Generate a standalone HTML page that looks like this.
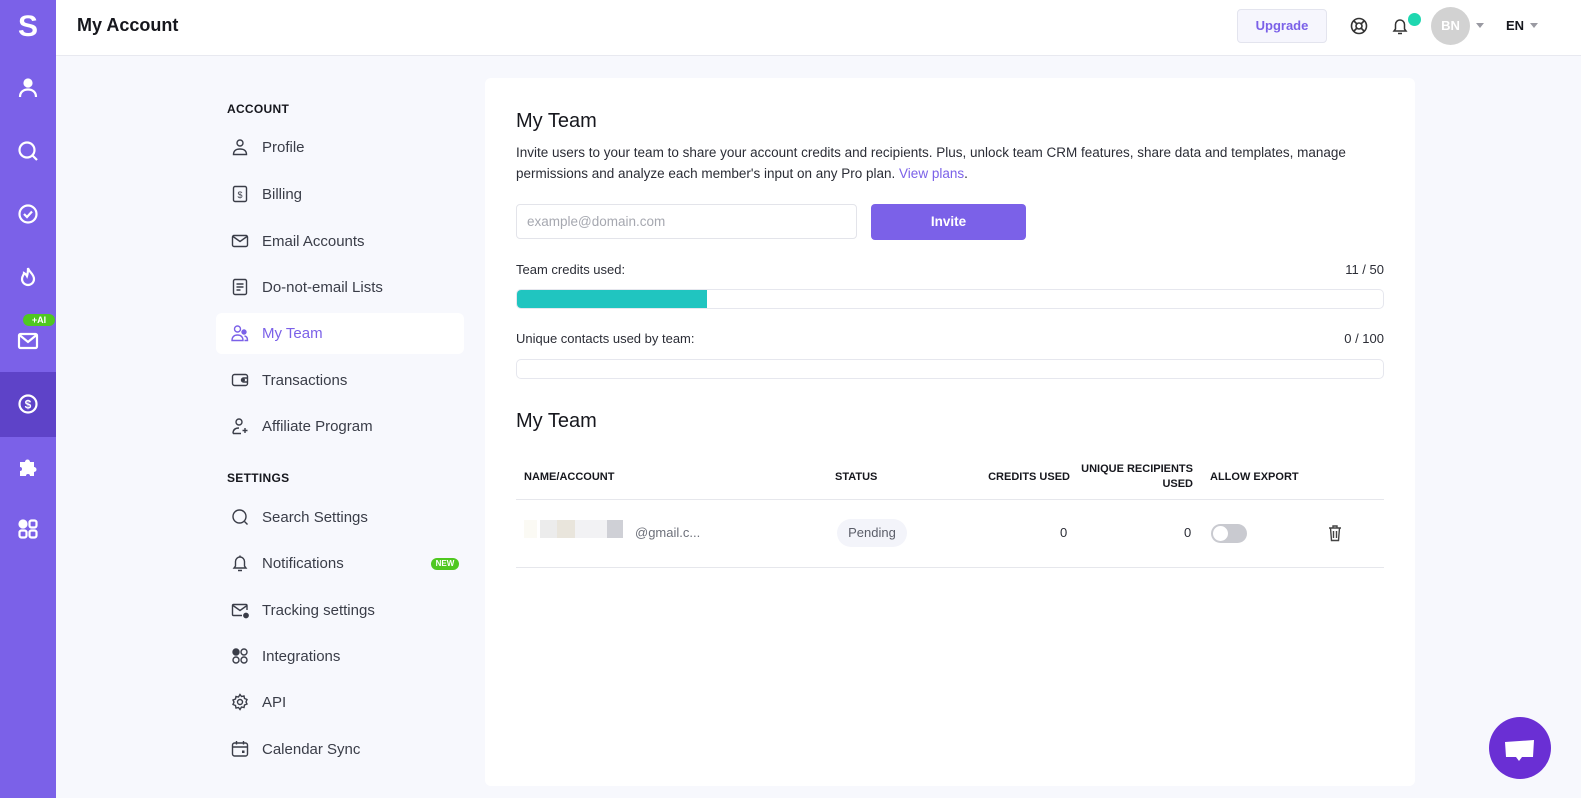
<!DOCTYPE html>
<html><head><meta charset="utf-8">
<style>
*{box-sizing:border-box;margin:0;padding:0}
body{width:1581px;height:798px;overflow:hidden;background:#f7f8fd;font-family:"Liberation Sans",sans-serif;color:#2b2d36;position:relative}
.side{position:absolute;left:0;top:0;width:56px;height:798px;background:#7b61e8}
.side .ic{position:absolute;left:16px;width:24px;height:24px}
.active{position:absolute;left:0;top:372px;width:56px;height:65px;background:#5e43c8}
.hdr{position:absolute;left:56px;top:0;right:0;height:56px;background:#fff;border-bottom:1px solid #e8e9f0}
.hdr h1{position:absolute;left:21px;top:15px;font-size:18px;font-weight:bold;color:#16171d}
.upg{position:absolute;left:1237px;top:9px;width:90px;height:34px;border:1px solid #e3e4ee;background:#f6f6fd;border-radius:4px;color:#7b61e8;font-size:13px;font-weight:bold;text-align:center;line-height:32px}
.av{position:absolute;left:1431px;top:7px;width:39px;height:38px;border-radius:50%;background:#d2d2d2;color:#fff;font-size:13px;font-weight:bold;text-align:center;line-height:38px}
.menu .sec{position:absolute;left:227px;font-size:12px;font-weight:bold;letter-spacing:.3px;color:#16171d}
.menu .it{position:absolute;left:216px;width:248px;height:41px;font-size:15px;color:#3a3d48;line-height:41px;padding-left:46px}
.menu .it svg{position:absolute;left:15px;top:11px;width:18px;height:18px}
.menu .it.on{background:#fff;border-radius:6px;color:#7b61e8}
.card{position:absolute;left:485px;top:78px;width:930px;height:708px;background:#fff;border-radius:6px}
.card .a{position:absolute}
.bar{position:absolute;left:31px;width:868px;height:20px;border:1px solid #e6e7ee;border-radius:5px;overflow:hidden;background:#fff}
.th{position:absolute;top:392px;font-size:11px;font-weight:bold;color:#16171d;line-height:15px}
</style></head><body>
<div class="side">
 <div style="position:absolute;left:0;width:56px;text-align:center;top:10px;color:#fff;font-size:30px;font-weight:bold">S</div>
 <div class="active"></div>
 <svg class="ic" style="top:76px" viewBox="0 0 24 24" fill="none" stroke="#fff" stroke-width="2.2"><circle cx="12" cy="7" r="3.5" fill="#fff"/><path d="M4 21c0-5 3.5-7.5 8-7.5s8 2.5 8 7.5"/></svg>
 <svg class="ic" style="top:139px" viewBox="0 0 24 24" fill="none" stroke="#fff" stroke-width="2.2"><circle cx="11" cy="11" r="7.5"/><path d="M16.5 16.5l4.5 4.5"/></svg>
 <svg class="ic" style="top:202px" viewBox="0 0 24 24" fill="none" stroke="#fff" stroke-width="2.2"><circle cx="12" cy="12" r="8.5"/><path d="M8 12l3 3 5-5.5"/></svg>
 <svg class="ic" style="top:265px" viewBox="0 0 24 24" fill="none" stroke="#fff" stroke-width="2.2"><path d="M12 3c1 4 6 6 6 11a6 6 0 0 1-12 0c0-3 2-4 2-6 2 1 3 3 3 3 1-3 1-5 1-8z"/></svg>
 <div style="position:absolute;left:23px;top:314px;width:32px;height:12px;border-radius:6px;background:#4fc820;color:#fff;font-size:9px;font-weight:bold;text-align:center;line-height:12px">+AI</div>
 <svg class="ic" style="top:329px" viewBox="0 0 24 24" fill="none" stroke="#fff" stroke-width="2.2"><rect x="3" y="5" width="18" height="14" rx="1.5"/><path d="M3.5 6l8.5 7 8.5-7"/></svg>
 <svg class="ic" style="top:392px" viewBox="0 0 24 24" fill="none" stroke="#fff" stroke-width="2.2"><circle cx="12" cy="12" r="8.5"/><text x="12" y="16.5" font-size="12" font-weight="bold" fill="#fff" stroke="none" text-anchor="middle" font-family="Liberation Sans">$</text></svg>
 <svg class="ic" style="top:455px" viewBox="0 0 24 24" fill="#fff"><path d="M4 7h5a2.5 2.5 0 1 1 5 0h4v5a2.5 2.5 0 1 1 0 5v4h-4a2 2 0 1 0-4 0H4v-5a2 2 0 1 0 0-4z"/></svg>
 <svg class="ic" style="top:517px" viewBox="0 0 24 24" fill="none" stroke="#fff" stroke-width="2.2"><circle cx="7" cy="7" r="3.5" fill="#fff"/><rect x="13.5" y="3.5" width="7" height="7" rx="2"/><rect x="3.5" y="13.5" width="7" height="7" rx="2"/><rect x="13.5" y="13.5" width="7" height="7" rx="2"/></svg>
</div>
<div class="hdr"><h1>My Account</h1></div>
<div class="upg">Upgrade</div>
<svg style="position:absolute;left:1350px;top:17px" width="18" height="18" viewBox="0 0 18 18" fill="none" stroke="#333" stroke-width="1.6"><circle cx="9" cy="9" r="7.5"/><circle cx="9" cy="9" r="3"/><path d="M4 4l3 3M14 4l-3 3M4 14l3-3M14 14l-3-3"/></svg>
<svg style="position:absolute;left:1390px;top:16px" width="20" height="20" viewBox="0 0 20 20" fill="none" stroke="#333" stroke-width="1.5"><path d="M4 15h12l-1.5-2V8.5a4.5 4.5 0 0 0-9 0V13z"/><path d="M8 17.5h4"/></svg>
<div style="position:absolute;left:1408px;top:13px;width:13px;height:13px;border-radius:50%;background:#1fd7b0"></div>
<div class="av">BN</div>
<div style="position:absolute;left:1476px;top:23px;border:4px solid transparent;border-top:5px solid #9a9aa2"></div>
<div style="position:absolute;left:1506px;top:18px;font-size:13px;font-weight:bold;color:#16171d">EN</div>
<div style="position:absolute;left:1530px;top:23px;border:4px solid transparent;border-top:5px solid #9a9aa2"></div>

<div class="menu">
 <div class="sec" style="top:102px">ACCOUNT</div>
 <div class="it" style="top:127px"><svg viewBox="0 0 18 18" fill="none" stroke="#3a3d48" stroke-width="1.4"><circle cx="9" cy="5" r="3"/><path d="M2.5 16.5c0-4 3-5.5 6.5-5.5s6.5 1.5 6.5 5.5z"/></svg>Profile</div>
 <div class="it" style="top:174px"><svg viewBox="0 0 18 18" fill="none" stroke="#3a3d48" stroke-width="1.4"><rect x="2.5" y="1.5" width="13" height="15" rx="1.5"/><text x="9" y="13" font-size="9" fill="#3a3d48" stroke="none" text-anchor="middle" font-family="Liberation Sans">$</text></svg>Billing</div>
 <div class="it" style="top:221px"><svg viewBox="0 0 18 18" fill="none" stroke="#3a3d48" stroke-width="1.4"><rect x="1.5" y="3.5" width="15" height="11" rx="1.5"/><path d="M2 4.5l7 5 7-5"/></svg>Email Accounts</div>
 <div class="it" style="top:267px"><svg viewBox="0 0 18 18" fill="none" stroke="#3a3d48" stroke-width="1.4"><rect x="2.5" y="1.5" width="13" height="15" rx="1.5"/><path d="M5.5 6h7M5.5 9h7M5.5 12h4"/></svg>Do-not-email Lists</div>
 <div class="it on" style="top:313px"><svg viewBox="0 0 18 18" fill="none" stroke="#7b61e8" stroke-width="1.4"><circle cx="6.5" cy="5" r="3"/><path d="M1 16.5c0-4 2.5-5.5 5.5-5.5s5.5 1.5 5.5 5.5z"/><circle cx="13" cy="8" r="2" fill="#7b61e8"/><path d="M13.5 12c2 .3 3 1.8 3 4.5h-3"/></svg>My Team</div>
 <div class="it" style="top:360px"><svg viewBox="0 0 18 18" fill="none" stroke="#3a3d48" stroke-width="1.4"><rect x="1.5" y="3.5" width="15" height="11" rx="2"/><path d="M16.5 7h-4a2 2 0 0 0 0 4h4"/><circle cx="12.5" cy="9" r=".8" fill="#3a3d48"/></svg>Transactions</div>
 <div class="it" style="top:406px"><svg viewBox="0 0 18 18" fill="none" stroke="#3a3d48" stroke-width="1.4"><circle cx="8" cy="5" r="3"/><path d="M2 16.5c0-4 2.5-5.5 6-5.5M10 16.5H2"/><path d="M14 11v5M11.5 13.5h5"/></svg>Affiliate Program</div>
 <div class="sec" style="top:471px">SETTINGS</div>
 <div class="it" style="top:497px"><svg viewBox="0 0 18 18" fill="none" stroke="#3a3d48" stroke-width="1.4"><circle cx="8.5" cy="8.5" r="6.5"/><path d="M13.5 13.5l3 3"/></svg>Search Settings</div>
 <div class="it" style="top:543px"><svg viewBox="0 0 18 18" fill="none" stroke="#3a3d48" stroke-width="1.4"><path d="M3 14h12l-1.5-2V7.5a4.5 4.5 0 0 0-9 0V12z"/><path d="M7 16.5h4M9 1.5v1.5"/></svg>Notifications</div>
 <div style="position:absolute;left:431px;top:558px;width:28px;height:12px;border-radius:6px;background:#4fc820;color:#fff;font-size:8px;font-weight:bold;text-align:center;line-height:12px">NEW</div>
 <div class="it" style="top:590px"><svg viewBox="0 0 18 18" fill="none" stroke="#3a3d48" stroke-width="1.4"><path d="M16 9V4.5a1 1 0 0 0-1-1H2.5a1 1 0 0 0-1 1v9a1 1 0 0 0 1 1H11"/><path d="M2 4.5l7 5 7-5"/><circle cx="15" cy="14.5" r="2.2" fill="#3a3d48"/></svg>Tracking settings</div>
 <div class="it" style="top:636px"><svg viewBox="0 0 18 18" fill="none" stroke="#3a3d48" stroke-width="1.4"><circle cx="5" cy="5" r="3" fill="#3a3d48"/><circle cx="13" cy="5" r="3"/><circle cx="5" cy="13" r="3"/><circle cx="13" cy="13" r="3"/></svg>Integrations</div>
 <div class="it" style="top:682px"><svg viewBox="0 0 18 18" fill="none" stroke="#3a3d48" stroke-width="1.4"><circle cx="9" cy="9" r="2.5"/><path d="M9 1.5l1.5 2 2.5-.5.5 2.5 2.5 1-1 2.5 1 2-2.5 1-.5 2.5-2.5-.5L9 16.5l-1.5-2-2.5.5-.5-2.5-2.5-1 1-2.5-1-2 2.5-1 .5-2.5 2.5.5z"/></svg>API</div>
 <div class="it" style="top:729px"><svg viewBox="0 0 18 18" fill="none" stroke="#3a3d48" stroke-width="1.4"><rect x="1.5" y="3" width="15" height="13" rx="2"/><path d="M1.5 7h15M5.5 1v3.5M12.5 1v3.5"/><rect x="11" y="10.5" width="2.5" height="2.5" fill="#3a3d48" stroke="none"/></svg>Calendar Sync</div>
</div>

<div class="card">
 <div class="a" style="left:31px;top:32px;font-size:20px;color:#16171d">My Team</div>
 <div class="a" style="left:31px;top:64px;width:860px;font-size:13.5px;line-height:21px;color:#2b2d36">Invite users to your team to share your account credits and recipients. Plus, unlock team CRM features, share data and templates, manage permissions and analyze each member's input on any Pro plan. <span style="color:#7b61e8">View plans</span>.</div>
 <div class="a" style="left:31px;top:126px;width:341px;height:35px;border:1px solid #e3e4ea;border-radius:4px;font-size:13.5px;color:#a6a8b0;line-height:33px;padding-left:10px">example@domain.com</div>
 <div class="a" style="left:386px;top:126px;width:155px;height:36px;background:#7b61e8;border-radius:4px;color:#fff;font-size:13.5px;font-weight:bold;text-align:center;line-height:36px">Invite</div>
 <div class="a" style="left:31px;top:184px;font-size:13px">Team credits used:</div>
 <div class="a" style="right:31px;top:184px;font-size:13px">11 / 50</div>
 <div class="bar" style="top:211px"><div style="width:190px;height:100%;background:#20c5c0"></div></div>
 <div class="a" style="left:31px;top:253px;font-size:13px">Unique contacts used by team:</div>
 <div class="a" style="right:31px;top:253px;font-size:13px">0 / 100</div>
 <div class="bar" style="top:281px"></div>
 <div class="a" style="left:31px;top:332px;font-size:20px;color:#16171d">My Team</div>
 <div class="th" style="left:39px">NAME/ACCOUNT</div>
 <div class="th" style="left:350px">STATUS</div>
 <div class="th" style="left:500px;width:85px;text-align:right">CREDITS USED</div>
 <div class="th" style="left:596px;width:112px;text-align:right;top:384px">UNIQUE RECIPIENTS USED</div>
 <div class="th" style="left:725px">ALLOW EXPORT</div>
 <div class="a" style="left:31px;top:421px;width:868px;height:1px;background:#e6e7ec"></div>
 <div class="a" style="left:39px;top:442px;width:13px;height:18px;background:#fbfaf4"></div>
 <div class="a" style="left:55px;top:442px;width:17px;height:18px;background:#ececec"></div>
 <div class="a" style="left:72px;top:442px;width:18px;height:18px;background:#e9e5dc"></div>
 <div class="a" style="left:90px;top:442px;width:32px;height:18px;background:#f2f2f4"></div>
 <div class="a" style="left:122px;top:442px;width:16px;height:18px;background:#cfd0d6"></div>
 <div class="a" style="left:150px;top:447px;font-size:13px;color:#6d707a">@gmail.c...</div>
 <div class="a" style="left:352px;top:441px;width:70px;height:28px;border-radius:14px;background:#f3f4fa;font-size:13px;color:#5b5e69;text-align:center;line-height:28px">Pending</div>
 <div class="a" style="left:575px;top:447px;font-size:13px">0</div>
 <div class="a" style="left:699px;top:447px;font-size:13px">0</div>
 <div class="a" style="left:726px;top:446px;width:36px;height:19px;border-radius:10px;background:#c9cad0"><div style="position:absolute;left:2px;top:2px;width:15px;height:15px;border-radius:50%;background:#fff"></div></div>
 <svg class="a" style="left:842px;top:446px" width="16" height="18" viewBox="0 0 16 18" fill="none" stroke="#444" stroke-width="1.4"><path d="M2 4h12M6 4V2h4v2M3.5 4l1 12.5h7l1-12.5M6.5 7v7M9.5 7v7"/></svg>
 <div class="a" style="left:31px;top:489px;width:868px;height:1px;background:#e6e7ec"></div>
</div>
<div style="position:absolute;left:1489px;top:717px;width:62px;height:62px;border-radius:50%;background:#6a2fd4"></div>
<svg style="position:absolute;left:1503px;top:738px" width="34" height="26" viewBox="0 0 34 26" fill="#fff"><path d="M2 4l29-2 -1 17H19l-3 4-3-4H3z"/></svg>
</body></html>
